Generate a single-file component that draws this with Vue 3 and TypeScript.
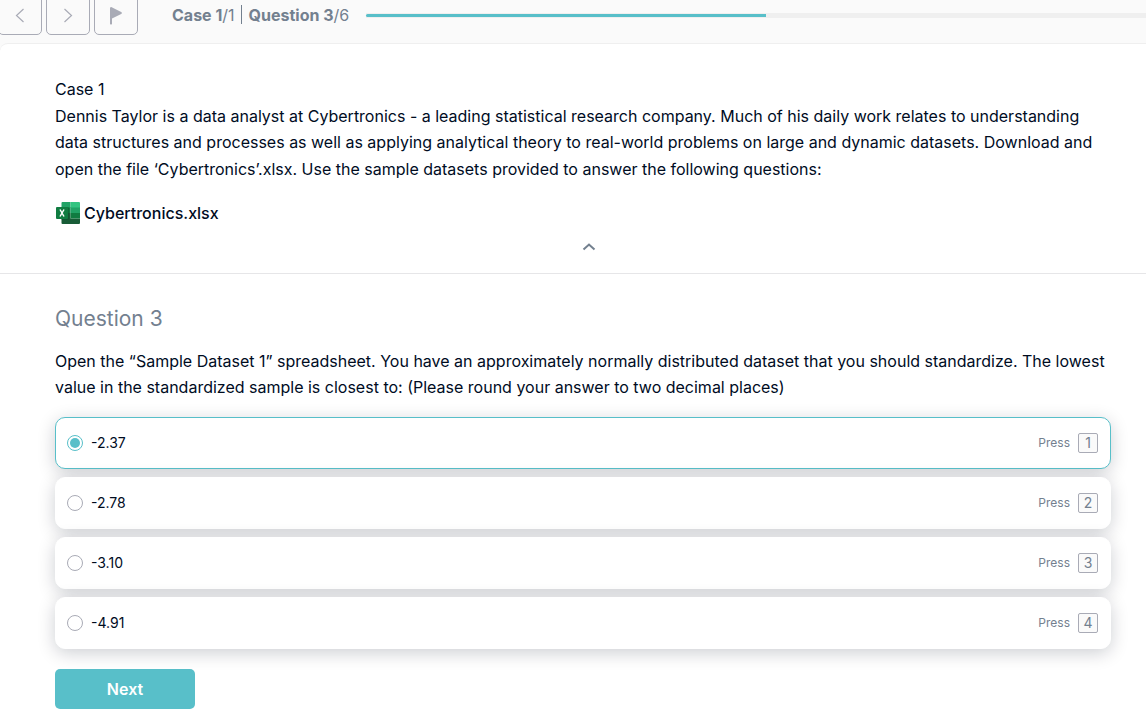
<script setup lang="ts">
import { ref } from 'vue'

interface Option {
  key: number
  label: string
}

const options: Option[] = [
  { key: 1, label: '-2.37' },
  { key: 2, label: '-2.78' },
  { key: 3, label: '-3.10' },
  { key: 4, label: '-4.91' },
]
const selected = ref<number>(1)
const expanded = ref<boolean>(true)
const currentCase = 1
const totalCases = 1
const currentQuestion = 3
const totalQuestions = 6
</script>

<template>
  <div class="page">
    <header class="toolbar">
      <nav class="nav">
        <button class="nav-btn" type="button" aria-label="Previous question">
          <svg width="16" height="16" viewBox="0 0 16 16"><path d="M11.5 2 4.500 8.500l7 6.500" /></svg>
        </button>
        <button class="nav-btn" type="button" aria-label="Next question">
          <svg width="16" height="16" viewBox="0 0 16 16"><path d="M4.500 2l7 6.500-7 6.500" /></svg>
        </button>
        <button class="nav-btn flag" type="button" aria-label="Flag question">
          <svg width="16" height="20" viewBox="0 0 16 20"><path d="M2 3Q2.500 1.700 3.700 2.200L13.200 7Q14.600 8 13.200 8.900L4 13.500V19Q3 20.200 2 19z" /></svg>
        </button>
      </nav>
      <div class="position">
        <b>Case {{ currentCase }}</b>/{{ totalCases }}<span class="separator"></span><b>Question {{ currentQuestion }}</b>/{{ totalQuestions }}
      </div>
      <div class="track" role="progressbar" aria-label="Progress" :aria-valuenow="currentQuestion" :aria-valuemax="totalQuestions">
        <div class="fill" :style="{ width: (currentQuestion / totalQuestions) * 100 + '%' }"></div>
      </div>
    </header>

    <main class="sheet">
      <section class="case">
        <div v-show="expanded" class="case-body">
          <p>Case 1</p>
          <p>
            Dennis Taylor is a data analyst at Cybertronics - a leading statistical research company. Much of his daily
            work relates to understanding data structures and processes as well as applying analytical theory to
            real-world problems on large and dynamic datasets. Download and open the file ‘Cybertronics’.xlsx. Use the
            sample datasets provided to answer the following questions:
          </p>
          <a class="file" href="#">
            <svg width="24" height="22" viewBox="0 0 24 22">
              <path fill="#21a366" d="M7 0h-.5A1 1 0 0 0 5.500 1v5h9V0z" />
              <path fill="#33c481" d="M14.500 0H23a1 1 0 0 1 1 1v5h-9.500z" />
              <path fill="#107c41" d="M5.500 5.500h9V11h-9z" />
              <path fill="#21a366" d="M14.500 5.500H24V11h-9.500z" />
              <path fill="#185c37" d="M5.500 11h9v5.500H24V21a1 1 0 0 1-1 1H6.500a1 1 0 0 1-1-1z" />
              <path fill="#107c41" d="M14.500 11H24v5.500h-9.500z" />
              <path fill="#0b4a2a" opacity=".4" d="M5.500 5H12a1 1 0 0 1 1 1v11a1 1 0 0 1-1 1H5.500z" />
              <rect fill="#107c41" y="5" width="12" height="12" rx="1" />
              <path fill="none" stroke="#fff" stroke-width="1.500" d="M4 7.500l4 7M8 7.500l-4 7" />
            </svg>
            <span>Cybertronics.xlsx</span>
          </a>
        </div>
        <button class="collapse" type="button" aria-label="Toggle case" :aria-expanded="expanded" @click="expanded = !expanded">
          <svg width="14" height="10" viewBox="0 0 14 10"><path d="M1.500 7.500 7 2.500l5.500 5" /></svg>
        </button>
      </section>

      <section class="question">
        <h1>Question 3</h1>
        <p>
          Open the “Sample Dataset 1” spreadsheet. You have an approximately normally distributed dataset that you
          should standardize. The lowest value in the standardized sample is closest to: (Please round your answer to
          two decimal places)
        </p>
        <div class="options">
          <label v-for="o in options" :key="o.key" class="option" :class="{ active: selected === o.key }">
            <input v-model="selected" type="radio" name="answer" :value="o.key" />
            <span class="answer">{{ o.label }}</span>
            <span class="press">Press</span>
            <kbd>{{ o.key }}</kbd>
          </label>
        </div>
        <button class="next" type="button">Next</button>
      </section>
    </main>
  </div>
</template>

<style>
body {
  margin: 0;
  background: #fff;
}
</style>

<style scoped>
.page {
  min-height: 100vh;
  display: flex;
  flex-direction: column;
  overflow: hidden;
  font-family: Inter, 'Liberation Sans', sans-serif;
  font-size: 16px;
  line-height: 1.66;
  color: #000c1f;
  background: #fafafa;
}
.toolbar {
  display: flex;
  align-items: center;
  height: 40px;
  margin: -5px -20px 8px -2px;
}
.nav {
  display: flex;
  gap: 4px;
}
.nav-btn {
  box-sizing: border-box;
  width: 44px;
  height: 40px;
  padding: 0;
  display: flex;
  align-items: center;
  justify-content: center;
  border: 1px solid #a9abb6;
  border-radius: 5px;
  background: transparent;
}
.nav-btn path {
  fill: none;
  stroke: #a9abb6;
  stroke-width: 1.2;
}
.flag path {
  fill: #a9abb6;
  stroke: none;
}
.position {
  display: flex;
  align-items: center;
  margin-left: 34px;
  white-space: pre;
  color: #73808f;
}
.position b {
  font-weight: 700;
}
.separator {
  width: 1px;
  height: 19px;
  margin: 0 7px 0 6px;
  background: #73808f;
}
.track {
  flex: 1;
  display: flex;
  align-items: center;
  height: 5px;
  margin-left: 17px;
  background: #efefef;
}
.fill {
  height: 3px;
  border-radius: 2px 0 0 2px;
  background: #58bfc9;
}
.sheet {
  flex: 1;
  margin-right: -32px;
  border-top: 1px solid #efefef;
  border-radius: 8px 8px 0 0;
  background: #fff;
}
.case {
  padding: 32px 0 16px;
  border-bottom: 1px solid #e6e6e8;
}
.case-body {
  padding: 0 67px 0 55px;
}
p {
  margin: 0;
}
.file {
  display: inline-flex;
  align-items: center;
  gap: 4px;
  margin: 18px 0 0 1px;
  color: inherit;
  font-weight: 500;
  text-decoration: none;
}
.collapse {
  display: flex;
  align-items: center;
  justify-content: center;
  width: 20px;
  height: 20px;
  margin: 5px auto 0;
  padding: 0;
  border: 0;
  background: none;
}
.collapse path {
  fill: none;
  stroke: #73808f;
  stroke-width: 2;
}
.question {
  padding: 28px 67px 18px 55px;
}
h1 {
  margin: 0 0 11px;
  font-size: 21px;
  font-weight: 400;
  color: #73808f;
}
.options {
  display: flex;
  flex-direction: column;
  gap: 8px;
  margin-top: 16px;
}
.option {
  box-sizing: border-box;
  display: flex;
  align-items: center;
  height: 52px;
  padding: 0 12px 0 11px;
  border: 1px solid #fff;
  border-radius: 10px;
  background: #fff;
  box-shadow: 0 4px 18px rgba(6, 16, 36, 0.2);
  font-size: 14px;
}
.option.active {
  border-color: #58bfc9;
}
.option input {
  appearance: none;
  box-sizing: border-box;
  width: 16px;
  height: 16px;
  margin: 0 8px 0 0;
  border: 1px solid #a9abb6;
  border-radius: 50%;
  background: #fff;
}
.option input:checked {
  padding: 2px;
  border-color: #58bfc9;
  background: #58bfc9 content-box;
}
.answer {
  flex: 1;
}
.press {
  font-size: 12px;
  color: #73808f;
}
kbd {
  box-sizing: border-box;
  width: 20px;
  height: 20px;
  margin-left: 8px;
  border: 1px solid #a9abb6;
  border-radius: 2px;
  background: #fafafa;
  font-family: inherit;
  font-size: 14px;
  line-height: 18px;
  text-align: center;
  color: #73808f;
}
.next {
  display: block;
  width: 140px;
  height: 40px;
  margin-top: 20px;
  border: 0;
  border-radius: 5px;
  background: #58bfc9;
  color: #fff;
  font-family: inherit;
  font-size: 16px;
  font-weight: 600;
}
</style>
